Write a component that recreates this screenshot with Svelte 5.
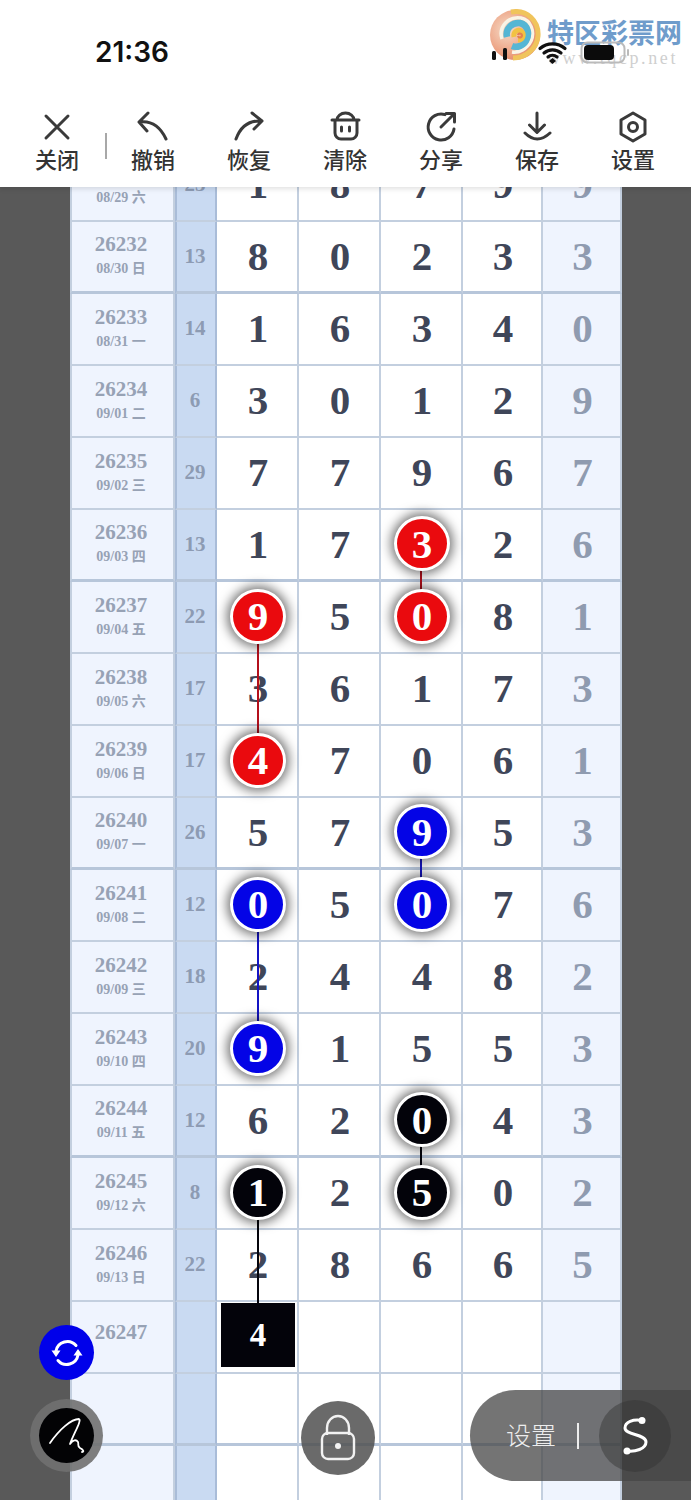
<script>
  const tools = [
    { label: '关闭', icon: 'close' },
    { label: '撤销', icon: 'undo' },
    { label: '恢复', icon: 'redo' },
    { label: '清除', icon: 'clear' },
    { label: '分享', icon: 'share' },
    { label: '保存', icon: 'save' },
    { label: '设置', icon: 'gear' }
  ];

  // nums: 5 drawn digits, marks: column index -> colour of the ball
  const rows = [
    { id: 26231, date: '08/29 六', sum: 23, nums: [1, 8, 7, 9, 9] },
    { id: 26232, date: '08/30 日', sum: 13, nums: [8, 0, 2, 3, 3] },
    { id: 26233, date: '08/31 一', sum: 14, nums: [1, 6, 3, 4, 0] },
    { id: 26234, date: '09/01 二', sum: 6, nums: [3, 0, 1, 2, 9] },
    { id: 26235, date: '09/02 三', sum: 29, nums: [7, 7, 9, 6, 7] },
    { id: 26236, date: '09/03 四', sum: 13, nums: [1, 7, 3, 2, 6], marks: { 2: 'red' } },
    { id: 26237, date: '09/04 五', sum: 22, nums: [9, 5, 0, 8, 1], marks: { 0: 'red', 2: 'red' } },
    { id: 26238, date: '09/05 六', sum: 17, nums: [3, 6, 1, 7, 3] },
    { id: 26239, date: '09/06 日', sum: 17, nums: [4, 7, 0, 6, 1], marks: { 0: 'red' } },
    { id: 26240, date: '09/07 一', sum: 26, nums: [5, 7, 9, 5, 3], marks: { 2: 'blue' } },
    { id: 26241, date: '09/08 二', sum: 12, nums: [0, 5, 0, 7, 6], marks: { 0: 'blue', 2: 'blue' } },
    { id: 26242, date: '09/09 三', sum: 18, nums: [2, 4, 4, 8, 2] },
    { id: 26243, date: '09/10 四', sum: 20, nums: [9, 1, 5, 5, 3], marks: { 0: 'blue' } },
    { id: 26244, date: '09/11 五', sum: 12, nums: [6, 2, 0, 4, 3], marks: { 2: 'black' } },
    { id: 26245, date: '09/12 六', sum: 8, nums: [1, 2, 5, 0, 2], marks: { 0: 'black', 2: 'black' } },
    { id: 26246, date: '09/13 日', sum: 22, nums: [2, 8, 6, 6, 5] },
    { id: 26247, date: '', sum: '', nums: [4, '', '', '', ''], pending: true },
    { id: '', date: '', sum: '', nums: ['', '', '', '', ''] },
    { id: '', date: '', sum: '', nums: ['', '', '', '', ''] }
  ];

  const ROW_H = 72;
  const colX = { 0: 188, 2: 351 };
  const links = [
    { col: 2, from: 5, to: 6, color: '#b4101c' },
    { col: 0, from: 6, to: 8, color: '#b4101c' },
    { col: 2, from: 9, to: 10, color: '#1414c4' },
    { col: 0, from: 10, to: 12, color: '#1414c4' },
    { col: 2, from: 13, to: 14, color: '#05050c' },
    { col: 0, from: 14, to: 16, color: '#05050c' }
  ];
  const rowY = (i) => ROW_H * i + ROW_H / 2 - 1;
</script>

<div class="page">
  <header class="top">
    <div class="watermark">
      <svg class="swirl" width="52" height="52" viewBox="0 0 52 52">
        <defs>
          <radialGradient id="swirlBg" cx="0.35" cy="0.4" r="0.75">
            <stop offset="0" stop-color="#f6dcc8" />
            <stop offset="0.65" stop-color="#ec9f80" />
            <stop offset="1" stop-color="#dc7a5e" />
          </radialGradient>
        </defs>
        <circle cx="26" cy="26" r="25" fill="url(#swirlBg)" />
        <path d="M22 3C38 0 50 12 49 27C48 40 36 49 24 49" fill="none" stroke="#f0c45c" stroke-width="5" />
        <path d="M13 30C9 17 20 7 32 9C42 11 46 23 42 32C38 40 30 44 23 43" fill="none" stroke="#f9f4e6" stroke-width="3.500" />
        <path d="M18 28C16 20 23 13 31 14C39 16 41 25 37 32C34 37 28 39 23 37" fill="none" stroke="#55b6d4" stroke-width="6.500" />
        <path d="M25 28C24 23 28 20 32 22C36 25 34 31 29 31" fill="none" stroke="#f2c243" stroke-width="5" />
        <path d="M29 26a2 2 0 1 1 0 1" fill="none" stroke="#e5804f" stroke-width="2.200" />
      </svg>
      <div class="mark-text">
        <span class="mark-name">特区彩票网</span>
        <span class="mark-url">www.tqcp.net</span>
      </div>
    </div>

    <div class="status">
      <span class="time">21:36</span>
      <svg class="status-icons" width="150" height="30" viewBox="0 0 150 30">
        <rect x="1" y="11" width="4" height="9" rx="1.5" fill="#111" />
        <rect x="12" y="8" width="4" height="12" rx="1.5" fill="#111" />
        <path d="M49 8.5a19 19 0 0 1 25 0M53 13a13 13 0 0 1 17 0M57 17a7 7 0 0 1 9 0" fill="none" stroke="#111" stroke-width="3.2" stroke-linecap="round" />
        <path d="M58 21l3.500-3 3.500 3-3.500 3z" fill="#111" />
        <rect x="90.500" y="2.500" width="43" height="20" rx="6" fill="none" stroke="#bbb" stroke-width="2" />
        <rect x="93" y="5" width="30" height="15" rx="4" fill="#0b0b0b" />
        <rect x="136" y="9" width="2" height="7" rx="1" fill="#bbb" />
      </svg>
    </div>

    <nav class="toolbar">
      {#each tools as tool}
        <button class="tool">
          <svg width="32" height="32" viewBox="0 0 32 32" fill="none" stroke="#3a3a3a" stroke-width="3" stroke-linecap="round" stroke-linejoin="round">
            {#if tool.icon === 'close'}
              <path d="M5 5L27 27M27 5L5 27" />
            {:else if tool.icon === 'undo'}
              <path d="M11 2L2 11L10 20M3 11Q20 9 29 28" />
            {:else if tool.icon === 'redo'}
              <path d="M19 2L29 10L21 18M28 10Q10 9 3 28" />
            {:else if tool.icon === 'clear'}
              <path d="M3 9H30M8 9a8.500 7 0 0 1 17 0M6 9V22a6 6 0 0 0 6 6H22a6 6 0 0 0 6-6V9M12.500 16v4M20.500 16v4" />
            {:else if tool.icon === 'share'}
              <path d="M20 3.600A13 13 0 1 0 29 18M16 16L29 3M21 2.500H29.500V11" />
            {:else if tool.icon === 'save'}
              <path d="M16 2V21M8.500 14L16 21.500L23.500 14M4 22Q16 34 29 22" />
            {:else}
              <path d="M16 2L28 9V23L16 30L4 23V9Z" />
              <circle cx="16" cy="16" r="4.500" />
            {/if}
          </svg>
          <span>{tool.label}</span>
        </button>
      {/each}
      <i class="tool-divider"></i>
    </nav>
  </header>

  <main class="chart">
    {#each rows as row, i}
      <div class="row" class:heavy={i % 4 === 1}>
        <div class="cell info" class:pending={row.pending}>
          <span class="issue">{row.id}</span>
          {#if row.date}<span class="date">{row.date}</span>{/if}
        </div>
        <div class="cell sum">{row.sum}</div>
        {#each row.nums as n, c}
          <div class="cell num" class:last={c === 4}>
            {#if row.marks && row.marks[c]}
              <span class="ball {row.marks[c]}">{n}</span>
            {:else if row.pending && c === 0}
              <span class="block">{n}</span>
            {:else}
              {n}
            {/if}
          </div>
        {/each}
      </div>
    {/each}

    <svg class="links" width="552" height={ROW_H * rows.length}>
      {#each links as l}
        <line x1={colX[l.col]} x2={colX[l.col]} y1={rowY(l.from)} y2={rowY(l.to)} stroke={l.color} stroke-width="2" />
      {/each}
    </svg>
  </main>

  <button class="float sync" aria-label="刷新">
    <svg width="32" height="32" viewBox="0 0 32 32" fill="none" stroke="#fff" stroke-width="3" stroke-linecap="round">
      <path d="M5 14A11.500 11.500 0 0 1 25 8.500M27 18A11.500 11.500 0 0 1 7 23.500" />
      <path d="M0.500 13.500H9.500L5 20ZM22.500 18.500H31.500L27 12Z" fill="#fff" stroke="none" />
    </svg>
  </button>

  <button class="float pen" aria-label="画笔">
    <span>
      <svg width="55" height="55" viewBox="0 0 55 55" fill="none" stroke="#fff" stroke-width="1.800" stroke-linecap="round" stroke-linejoin="round">
        <path d="M11 35C20 22 32 11 40 11C43 12 35 25 31 36C34 32 37 31 39 34C40 37 38 38 41 40C45 42 45 44 43 44" />
      </svg>
    </span>
  </button>

  <button class="float lock" aria-label="锁定">
    <svg width="40" height="50" viewBox="0 0 40 50" fill="none" stroke="#f2f2f2" stroke-width="2.400">
      <path d="M9 22V15a11 12 0 0 1 22 0V22" />
      <rect x="4" y="20" width="32" height="26" rx="6" />
      <circle cx="20" cy="33" r="3" fill="#f2f2f2" stroke="none" />
    </svg>
  </button>

  <div class="float pill">
    <span class="pill-label">设置</span>
    <i class="pill-divider"></i>
    <span class="pill-knob">
      <svg width="40" height="40" viewBox="0 0 40 40" fill="none" stroke="#fff" stroke-width="3" stroke-linecap="round">
        <path d="M27 4.500C18 3 10 6 10 12C10 19 31 18 31 26C31 33 20 36 12 35" />
        <circle cx="27" cy="4.500" r="3.500" fill="#fff" stroke="none" />
        <circle cx="12" cy="35" r="3.500" fill="#fff" stroke="none" />
      </svg>
    </span>
  </div>
</div>

<style>
  :global(body) {
    background: #595959;
  }

  .page {
    position: relative;
    height: 1500px;
    overflow: hidden;
    background: #595959;
    font-family: "Liberation Serif", "Noto Sans CJK SC", serif;
  }

  button {
    border: 0;
    padding: 0;
    background: none;
    font: inherit;
  }

  .top {
    position: relative;
    z-index: 5;
    height: 187px;
    background: #fff;
    box-shadow: 0 2px 5px rgb(0 0 0 / 0.12);
  }

  .status {
    position: relative;
    z-index: 1;
    display: flex;
    justify-content: space-between;
    padding: 35px 52px 0 95px;
    height: 66px;
    box-sizing: border-box;
  }

  .time {
    font-family: Inter, "Liberation Sans", sans-serif;
    font-size: 28px;
    font-weight: 600;
    line-height: 34px;
    color: #111;
  }

  .status-icons {
    margin-top: 5px;
    margin-right: -2px;
  }

  .watermark {
    position: absolute;
    top: 9px;
    left: 489px;
    display: flex;
  }

  .mark-text {
    display: flex;
    flex-direction: column;
    margin-left: 6px;
    width: 136px;
  }

  .mark-name {
    margin-top: 7px;
    font-family: "Noto Sans CJK SC", sans-serif;
    font-size: 27px;
    font-weight: 700;
    line-height: 32px;
    color: #6f9ccb;
    white-space: nowrap;
  }

  .mark-url {
    font-family: "Liberation Serif", serif;
    font-size: 18px;
    line-height: 20px;
    letter-spacing: 2.6px;
    color: #cfcfcf;
    white-space: nowrap;
  }

  .toolbar {
    position: relative;
    display: flex;
    padding: 45px 0 0 9px;
  }

  .tool {
    display: flex;
    flex-direction: column;
    align-items: center;
    width: 96px;
    color: #333;
    font-family: "Noto Sans CJK SC", sans-serif;
    font-size: 22px;
    font-weight: 500;
    line-height: 30px;
  }

  .tool-divider {
    position: absolute;
    left: 105px;
    top: 67px;
    width: 2px;
    height: 26px;
    background: #a8a8a8;
  }

  .chart {
    position: relative;
    width: 552px;
    margin: -37px 0 0 70px;
  }

  .row {
    display: grid;
    grid-template-columns: 105px 42px 82px 82px 82px 80px 79px;
    height: 72px;
  }

  .cell {
    display: flex;
    align-items: center;
    justify-content: center;
    box-sizing: border-box;
    border-right: 2px solid #c3cfdf;
    border-bottom: 2px solid #c3cfdf;
    font-weight: 700;
  }

  .row.heavy .cell {
    border-bottom: 3px solid #b7c6da;
  }

  .info {
    flex-direction: column;
    border-left: 2px solid #c3cfdf;
    padding: 0 3px 1px 0;
    background: #eff4fe;
    color: #97a2b5;
  }

  .info.pending {
    padding-bottom: 11px;
  }

  .issue {
    font-size: 21px;
    line-height: 24px;
  }

  .date {
    font-size: 14px;
    line-height: 22px;
    margin-top: 2px;
  }

  .sum {
    padding: 0 2px 1px 0;
    background: #c9daf2;
    border-left: 2px solid #a9bcd8;
    border-right: 2px solid #a9bcd8;
    color: #8d9bb3;
    font-size: 21px;
  }

  .num {
    padding: 0 0 2px 2px;
    background: #fff;
    color: #3f4659;
    font-size: 41px;
  }

  .num.last {
    background: #eff4fe;
    color: #8f9bb0;
  }

  .ball {
    position: relative;
    z-index: 2;
    display: flex;
    align-items: center;
    justify-content: center;
    box-sizing: border-box;
    width: 56px;
    height: 55px;
    border: 3px solid #fff;
    border-radius: 50%;
    color: #fff;
    box-shadow: 0 0 11px 3px rgb(0 0 0 / 0.55);
  }

  .ball.red {
    background: #ea0a0e;
  }

  .ball.blue {
    background: #0404e6;
  }

  .ball.black {
    background: #03030a;
  }

  .block {
    position: relative;
    z-index: 2;
    display: flex;
    align-items: center;
    justify-content: center;
    width: 74px;
    height: 64px;
    margin-top: -2px;
    background: #03030a;
    color: #fff;
    font-size: 33px;
  }

  .links {
    position: absolute;
    top: 0;
    left: 0;
    z-index: 1;
    pointer-events: none;
  }

  .float {
    position: absolute;
    z-index: 4;
    display: flex;
    align-items: center;
    justify-content: center;
  }

  .sync {
    left: 39px;
    top: 1325px;
    width: 55px;
    height: 55px;
    border-radius: 50%;
    background: #0000ea;
  }

  .pen {
    left: 30px;
    top: 1399px;
    width: 73px;
    height: 73px;
    border-radius: 50%;
    background: rgb(112 112 112 / 0.9);
  }

  .pen span {
    display: block;
    width: 55px;
    height: 55px;
    border-radius: 50%;
    background: #030305;
  }

  .lock {
    left: 301px;
    top: 1401px;
    width: 74px;
    height: 74px;
    border-radius: 50%;
    background: rgb(80 80 80 / 0.85);
  }

  .pill {
    left: 470px;
    top: 1390px;
    width: 221px;
    height: 91px;
    justify-content: flex-start;
    box-sizing: border-box;
    padding-left: 36px;
    border-radius: 46px 0 0 46px;
    background: rgb(70 70 70 / 0.75);
  }

  .pill-label {
    margin-top: -4px;
    font-family: "Noto Sans CJK SC", sans-serif;
    font-size: 25px;
    font-weight: 300;
    color: #ededed;
  }

  .pill-divider {
    width: 2px;
    height: 26px;
    margin-left: 21px;
    background: #ededed;
  }

  .pill-knob {
    display: flex;
    align-items: center;
    justify-content: center;
    width: 72px;
    height: 72px;
    margin-left: 20px;
    border-radius: 50%;
    background: rgb(50 50 50 / 0.45);
  }
</style>
